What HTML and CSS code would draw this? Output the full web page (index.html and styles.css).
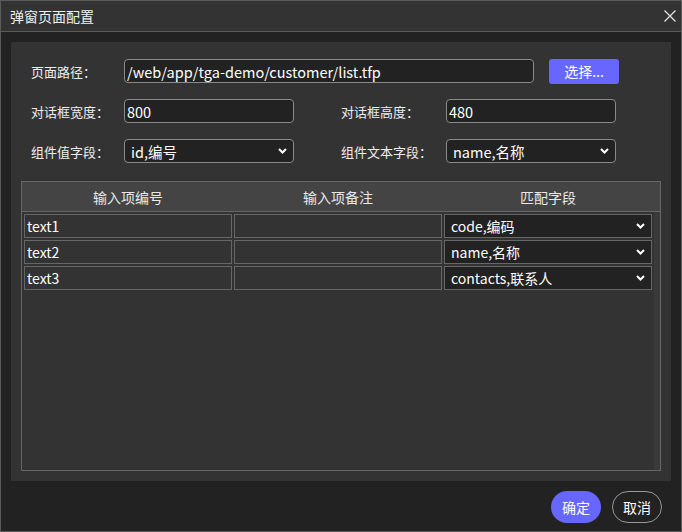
FILE: index.html
```html
<!DOCTYPE html>
<html lang="zh">
<head>
<meta charset="utf-8">
<title>弹窗页面配置</title>
<link rel="stylesheet" href="styles.css">
</head>
<body>
<div class="dialog">
  <div class="titlebar">
    <span class="title">弹窗页面配置</span>
    <svg class="close" width="12" height="12" viewBox="0 0 12 12"><path d="M0.5 0.5 L11.5 11.5 M11.5 0.5 L0.5 11.5" stroke="#e0e0e0" stroke-width="1.3" fill="none"/></svg>
  </div>
  <div class="body">
    <div class="panel">
      <div class="form">
        <div class="row">
          <label class="lbl">页面路径：</label>
          <input class="inp inp-path" value="/web/app/tga-demo/customer/list.tfp">
          <button class="btn-pick">选择...</button>
        </div>
        <div class="row">
          <label class="lbl">对话框宽度：</label>
          <input class="inp inp-short" value="800">
          <label class="lbl lbl2">对话框高度：</label>
          <input class="inp inp-short" value="480">
        </div>
        <div class="row">
          <label class="lbl">组件值字段：</label>
          <div class="sel inp-short"><span>id,编号</span><svg class="chev" width="9" height="6" viewBox="0 0 9 6"><path d="M1 1 L4.5 4.5 L8 1" stroke="#fff" stroke-width="2" fill="none"/></svg></div>
          <label class="lbl lbl2">组件文本字段：</label>
          <div class="sel inp-short"><span>name,名称</span><svg class="chev" width="9" height="6" viewBox="0 0 9 6"><path d="M1 1 L4.5 4.5 L8 1" stroke="#fff" stroke-width="2" fill="none"/></svg></div>
        </div>
      </div>
      <div class="table">
        <div class="thead">
          <div class="th">输入项编号</div>
          <div class="th">输入项备注</div>
          <div class="th">匹配字段</div>
        </div>
        <div class="tbody">
          <div class="rows">
            <div class="tr">
              <div class="cell">text1</div>
              <div class="cell"></div>
              <div class="cell cell-sel"><span>code,编码</span><svg class="chev" width="9" height="6" viewBox="0 0 9 6"><path d="M1 1 L4.5 4.5 L8 1" stroke="#fff" stroke-width="2" fill="none"/></svg></div>
            </div>
            <div class="tr">
              <div class="cell">text2</div>
              <div class="cell"></div>
              <div class="cell cell-sel"><span>name,名称</span><svg class="chev" width="9" height="6" viewBox="0 0 9 6"><path d="M1 1 L4.5 4.5 L8 1" stroke="#fff" stroke-width="2" fill="none"/></svg></div>
            </div>
            <div class="tr">
              <div class="cell">text3</div>
              <div class="cell"></div>
              <div class="cell cell-sel"><span>contacts,联系人</span><svg class="chev" width="9" height="6" viewBox="0 0 9 6"><path d="M1 1 L4.5 4.5 L8 1" stroke="#fff" stroke-width="2" fill="none"/></svg></div>
            </div>
          </div>
          <div class="scrolltrack"></div>
        </div>
      </div>
    </div>
    <div class="footer">
      <button class="btn-ok">确定</button>
      <button class="btn-cancel">取消</button>
    </div>
  </div>
</div>
</body>
</html>
```

FILE: styles.css
```css
* { box-sizing: border-box; }
html, body { margin: 0; padding: 0; background: #222222; }
body {
  font-family: "Noto Sans CJK SC", "Noto Sans", sans-serif;
  color: #f2f2f2;
}
.dialog {
  width: 682px;
  height: 532px;
  border: 1px solid #5a5a5a;
  background: #222222;
  display: flex;
  flex-direction: column;
}
.titlebar {
  height: 31px;
  flex: none;
  background: #333333;
  border-bottom: 1px solid #5a5a5a;
  display: flex;
  align-items: center;
  justify-content: space-between;
  padding: 0 5px 0 9px;
}
.title { font-size: 14px; color: #f0f0f0; line-height: 1; }
.close { display: block; }
.body {
  flex: 1;
  display: flex;
  flex-direction: column;
  padding: 10px 10px 8px 10px;
}
.panel {
  flex: 1;
  background: #333333;
  padding: 17px 10px 10px 10px;
  display: flex;
  flex-direction: column;
}
.form {
  display: flex;
  flex-direction: column;
  gap: 16px;
  padding-left: 10px;
}
.row {
  display: flex;
  align-items: center;
  height: 24px;
}
.lbl {
  width: 93px;
  flex: none;
  font-size: 13px;
  color: #eeeeee;
}
.lbl2 { margin-left: 47px; width: 105px; }
.inp {
  height: 24px;
  background: #222222;
  border: 1px solid #8a8a8a;
  border-radius: 4px;
  color: #ffffff;
  font-family: "Noto Sans CJK SC", "Noto Sans", sans-serif;
  font-size: 14.5px;
  padding: 0 2px;
  outline: none;
  margin: 0;
}
.inp-path { width: 410px; }
.inp-short { width: 170px; }
.btn-pick {
  margin-left: 15px;
  width: 70px;
  height: 25px;
  border: none;
  border-radius: 3px;
  background: #6766fe;
  color: #ffffff;
  font-family: "Noto Sans CJK SC", "Noto Sans", sans-serif;
  font-size: 14px;
  padding: 0;
}
.sel {
  height: 24px;
  background: #222222;
  border: 1px solid #8a8a8a;
  border-radius: 4px;
  color: #ffffff;
  font-size: 14.5px;
  display: flex;
  align-items: center;
  justify-content: space-between;
  padding: 0 6px 0 6px;
}
.chev { display: block; flex: none; }
.table {
  margin-top: 18px;
  flex: 1;
  border: 1px solid #666666;
  display: flex;
  flex-direction: column;
}
.thead {
  height: 30px;
  flex: none;
  background: #444444;
  border-bottom: 1px solid #666666;
  display: flex;
  gap: 2px;
  padding-left: 2px;
}
.th {
  width: 208px;
  font-size: 14px;
  color: #e8e8e8;
  display: flex;
  align-items: center;
  justify-content: center;
}
.tbody {
  flex: 1;
  display: flex;
}
.rows {
  flex: 1;
  padding: 2px 2px 0 2px;
  display: flex;
  flex-direction: column;
  gap: 2px;
}
.tr {
  display: flex;
  gap: 2px;
}
.cell {
  width: 208px;
  height: 24px;
  border: 1px solid #666666;
  background: #333333;
  color: #ffffff;
  font-size: 14px;
  display: flex;
  align-items: center;
  padding: 0 2px;
}
.cell-sel {
  background: #222222;
  justify-content: space-between;
  padding: 0 6px 0 6px;
}
.scrolltrack {
  width: 6px;
  flex: none;
  background: #3a3a3a;
}
.footer {
  flex: none;
  margin-top: 10px;
  display: flex;
  justify-content: flex-end;
  gap: 11px;
  padding-right: 9px;
}
.btn-ok, .btn-cancel {
  width: 50px;
  height: 32px;
  border-radius: 16px;
  font-family: "Noto Sans CJK SC", "Noto Sans", sans-serif;
  font-size: 14px;
  color: #ffffff;
  padding: 0;
}
.btn-ok { background: #6766fe; border: none; }
.btn-cancel { background: transparent; border: 1px solid #999999; }
```
